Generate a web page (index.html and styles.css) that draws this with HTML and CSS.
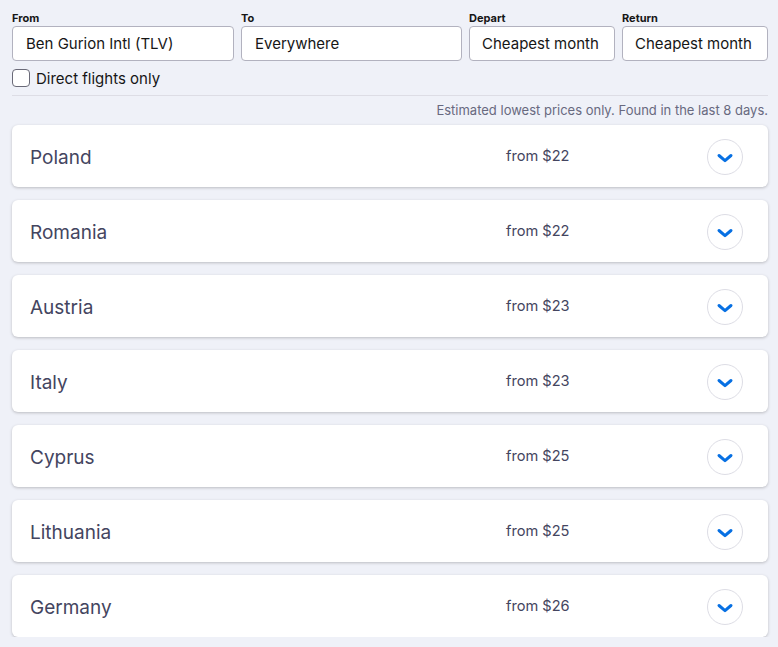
FILE: index.html
```html
<!DOCTYPE html>
<html>
<head>
<meta charset="utf-8">
<link rel="stylesheet" href="styles.css">
</head>
<body>
<div class="page">
  <div class="search">
    <div class="field from"><label>From</label><div class="input">Ben Gurion Intl (TLV)</div></div>
    <div class="field to"><label>To</label><div class="input">Everywhere</div></div>
    <div class="field depart"><label>Depart</label><div class="input">Cheapest month</div></div>
    <div class="field return"><label>Return</label><div class="input">Cheapest month</div></div>
  </div>
  <div class="direct"><span class="box"></span><span>Direct flights only</span></div>
  <div class="divider"></div>
  <div class="note">Estimated lowest prices only. Found in the last 8 days.</div>
  <div class="list">
    <div class="card"><span class="name">Poland</span><span class="price">from $22</span><span class="btn"><svg viewBox="0 0 20 20"><path d="M4 7.5l6 5.2 6-5.2" fill="none" stroke="#0770e3" stroke-width="3" stroke-linecap="round" stroke-linejoin="round"/></svg></span></div>
    <div class="card"><span class="name">Romania</span><span class="price">from $22</span><span class="btn"><svg viewBox="0 0 20 20"><path d="M4 7.5l6 5.2 6-5.2" fill="none" stroke="#0770e3" stroke-width="3" stroke-linecap="round" stroke-linejoin="round"/></svg></span></div>
    <div class="card"><span class="name">Austria</span><span class="price">from $23</span><span class="btn"><svg viewBox="0 0 20 20"><path d="M4 7.5l6 5.2 6-5.2" fill="none" stroke="#0770e3" stroke-width="3" stroke-linecap="round" stroke-linejoin="round"/></svg></span></div>
    <div class="card"><span class="name">Italy</span><span class="price">from $23</span><span class="btn"><svg viewBox="0 0 20 20"><path d="M4 7.5l6 5.2 6-5.2" fill="none" stroke="#0770e3" stroke-width="3" stroke-linecap="round" stroke-linejoin="round"/></svg></span></div>
    <div class="card"><span class="name">Cyprus</span><span class="price">from $25</span><span class="btn"><svg viewBox="0 0 20 20"><path d="M4 7.5l6 5.2 6-5.2" fill="none" stroke="#0770e3" stroke-width="3" stroke-linecap="round" stroke-linejoin="round"/></svg></span></div>
    <div class="card"><span class="name">Lithuania</span><span class="price">from $25</span><span class="btn"><svg viewBox="0 0 20 20"><path d="M4 7.5l6 5.2 6-5.2" fill="none" stroke="#0770e3" stroke-width="3" stroke-linecap="round" stroke-linejoin="round"/></svg></span></div>
    <div class="card"><span class="name">Germany</span><span class="price">from $26</span><span class="btn"><svg viewBox="0 0 20 20"><path d="M4 7.5l6 5.2 6-5.2" fill="none" stroke="#0770e3" stroke-width="3" stroke-linecap="round" stroke-linejoin="round"/></svg></span></div>
  </div>
</div>
</body>
</html>
```
FILE: styles.css
```css
html, body { margin: 0; padding: 0; }
body {
  background: #eff1f8;
  font-family: Inter, "Noto Sans", sans-serif;
  color: #111236;
  overflow: hidden;
}
.page { padding: 10px 10px 0 12px; }
.search { display: flex; gap: 7px; }
.field { display: flex; flex-direction: column; }
.from { width: 222px; }
.to { width: 221px; }
.depart, .return { width: 146px; }
.field label {
  font-size: 11px;
  font-weight: 700;
  line-height: 16px;
  color: #161616;
}
.input {
  height: 35px;
  box-sizing: border-box;
  border: 1px solid #b2b2bf;
  border-radius: 4px;
  background: #fff;
  font-size: 15px;
  line-height: 34px;
  padding-left: 13px;
  color: #161616;
  white-space: nowrap;
}
.depart .input, .return .input { padding-left: 12px; }
.direct {
  display: flex;
  align-items: center;
  gap: 6px;
  margin-top: 8px;
  font-size: 15px;
  color: #161616;
  height: 18px;
}
.box {
  width: 18px; height: 18px;
  box-sizing: border-box;
  border: 1px solid #6a6a78;
  border-radius: 4px;
  background: #fff;
}
.divider { height: 1px; background: #dddde5; margin-top: 8px; }
.note {
  text-align: right;
  font-size: 13px;
  color: #68697f;
  line-height: 16px;
  margin-top: 6px;
}
.list { display: flex; flex-direction: column; gap: 13px; margin-top: 7px; }
.card {
  height: 62px;
  box-sizing: border-box;
  background: #fff;
  border-radius: 6px;
  box-shadow: 0 1px 3px rgba(37, 32, 31, 0.25);
  display: grid;
  grid-template-columns: 476px 1fr 36px;
  align-items: center;
  padding: 0 25px 0 18px;
}
.name { font-size: 19px; color: #444560; margin-top: 2px; }
.price { font-size: 14.6px; color: #444560; margin-top: 0; }
.btn {
  width: 36px; height: 36px;
  box-sizing: border-box;
  border: 1px solid #dddde5;
  border-radius: 50%;
  display: flex; align-items: center; justify-content: center;
  margin-top: 2px;
}
.btn svg { width: 20px; height: 20px; margin-top: 1px; }
```
